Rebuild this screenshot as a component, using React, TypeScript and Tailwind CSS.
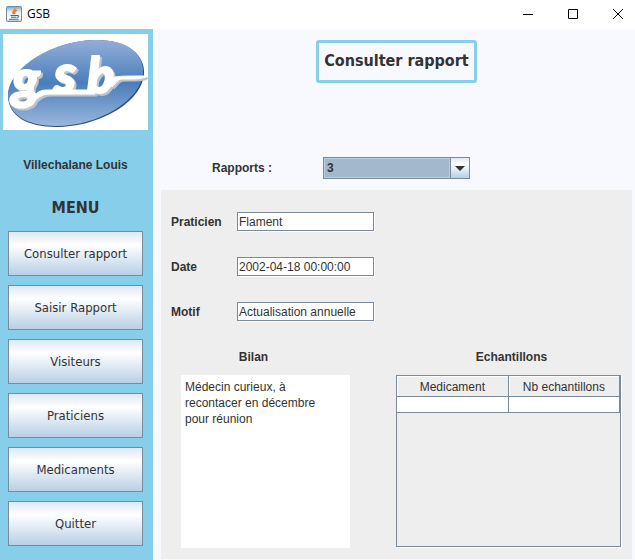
import React from "react";

const ARIAL = "font-['Liberation_Sans',Arial,sans-serif]";
const TAHOMA = "font-['DejaVu_Sans_Condensed','DejaVu_Sans',sans-serif] [font-stretch:condensed]";

const menuItems = ["Consulter rapport", "Saisir Rapport", "Visiteurs", "Praticiens", "Medicaments", "Quitter"];

const fields = [
  { id: "praticien", label: "Praticien", value: "Flament" },
  { id: "date", label: "Date", value: "2002-04-18 00:00:00" },
  { id: "motif", label: "Motif", value: "Actualisation annuelle" },
];

function JavaIcon() {
  return (
    <svg viewBox="0 0 16 16" className="h-4 w-4" aria-hidden="true">
      <defs>
        <linearGradient id="java-bg" x1="0" y1="0" x2="0" y2="1">
          <stop offset="0" stopColor="#86a3bb" />
          <stop offset="0.35" stopColor="#e6edf3" />
          <stop offset="0.8" stopColor="#ffffff" />
          <stop offset="1" stopColor="#a9bfd0" />
        </linearGradient>
      </defs>
      <rect x="0.5" y="0.5" width="15" height="15" rx="1" fill="url(#java-bg)" stroke="#6f8ba3" />
      <path d="M9 2.500C9.500 4.500 5.500 5 7.500 8.200M10.800 4.300C8.500 5.300 8 6.500 9 8.200" fill="none" stroke="#ee7a1a" strokeWidth="1.5" />
      <path d="M4.500 9.500h6.500M5 11.300h5.500M3 13.300h9.500M11 9.500c2.500-.4 2 1.800 0 2" fill="none" stroke="#3f6d92" strokeWidth="1.1" />
    </svg>
  );
}

function GsbLogo() {
  return (
    <svg viewBox="0 0 145 96" className="block w-full bg-white" role="img" aria-label="gsb">
      <defs>
        <linearGradient id="oval" x1="0" y1="0" x2="0" y2="1">
          <stop offset="0" stopColor="#93aed8" />
          <stop offset="0.5" stopColor="#4a7ebb" />
          <stop offset="1" stopColor="#9bb6dc" />
        </linearGradient>
        <filter id="relief" x="-10%" y="-10%" width="130%" height="130%">
          <feDropShadow dx="2" dy="2" stdDeviation="0.3" floodColor="#c0c3c8" floodOpacity="1" />
        </filter>
      </defs>
      <path d="M5 63C4 37 47 6 94 6c31 0 48 15 47 34-2 28-45 53-88 53C24 93 6 82 5 63z" fill="#2d4f80" />
      <path d="M5 62C4 36 47 6 94 6c31 0 47 14 46 33-2 27-44 53-87 53C24 92 6 81 5 62z" fill="url(#oval)" />
      <g filter="url(#relief)" fill="#fff" stroke="#fff" strokeLinejoin="round">
        <g className="font-['Lato',sans-serif] font-black italic" strokeWidth="2">
          <text x="9" y="64" fontSize="54">g</text>
          <text x="51" y="59" fontSize="54">s</text>
          <text x="84" y="59" fontSize="50">b</text>
        </g>
        <path d="M30 64C35 56 40 56 46 56H92V60H46C39 60 35 64 29 69z" strokeWidth="1" />
        <path d="M108 45C112 42 117 42 144 42C139 45 136 45 119 45C115 45 113 49 109 53z" strokeWidth="1" />
      </g>
    </svg>
  );
}

export default function App() {
  return (
    <div className={`flex min-h-screen flex-col bg-[#f8f8ff] text-xs text-[#333] ${ARIAL}`}>
      <header className="flex h-[29px] items-center overflow-hidden bg-white pb-0.5 pl-1.5 text-black">
        <JavaIcon />
        <span className="ml-[5px] flex-1 font-['Open_Sans',sans-serif] text-xs">GSB</span>
        <div className="-mr-[5px] flex h-full">
          <button aria-label="Minimize" className="flex w-[45px] items-center justify-center">
            <svg viewBox="0 0 10 10" className="w-2.5"><path d="M0 5.500h10" stroke="#000" /></svg>
          </button>
          <button aria-label="Maximize" className="flex w-[45px] items-center justify-center">
            <svg viewBox="0 0 10 10" className="w-2.5"><path d="M.5.5h9v9h-9z" fill="none" stroke="#000" /></svg>
          </button>
          <button aria-label="Close" className="flex w-[45px] items-center justify-center">
            <svg viewBox="0 0 10 10" className="w-2.5"><path d="M0 0l10 10M10 0L0 10" stroke="#000" /></svg>
          </button>
        </div>
      </header>
      <div className="flex flex-1">
        <aside className="flex w-[153px] shrink-0 flex-col bg-[#87ceeb]">
          <div className="pt-[5px] pr-[5px] pl-[3px]"><GsbLogo /></div>
          <p className="mt-[27px] pr-0.5 text-center leading-4 font-bold">Villechalane Louis</p>
          <h2 className={`mt-[25px] pr-0.5 text-center text-base leading-5 font-bold ${TAHOMA}`}>MENU</h2>
          <nav className="mt-[13px] flex flex-col gap-[9px] pr-[10px] pl-2">
            {menuItems.map((item) => (
              <button key={item} className={`h-[45px] border border-[#7a8a99] bg-linear-to-b from-[#dde8f3] via-white via-30% to-[#b8cfe5] text-[13px] ${TAHOMA}`}>
                {item}
              </button>
            ))}
          </nav>
        </aside>
        <main className="flex flex-1 flex-col pr-[3px] pb-px pl-2">
          <h1 className={`mt-[11px] self-center rounded-[3px] border-3 border-[#87ceeb] px-[5px] pt-2 pb-[9px] text-base leading-5 font-bold ${TAHOMA}`}>
            Consulter rapport
          </h1>
          <div className="mt-[74px] flex items-center pl-[51px]">
            <label htmlFor="rapports" className="w-[111px] font-bold">Rapports :</label>
            <div className="grid h-[22px] w-[147px] grid-cols-[1fr_19px] border border-[#7a8a99]">
              <select id="rapports" className="appearance-none border border-[#b8cfe5] bg-[#a3b8cc] pl-0.5 font-bold">
                <option>3</option>
              </select>
              <span className="flex items-center justify-center border-l border-[#7a8a99] bg-linear-to-b from-[#dde8f3] via-white via-30% to-[#b8cfe5]">
                <svg viewBox="0 0 10 5" className="w-2.5" aria-hidden="true"><path d="M0 0h10L5 5z" fill="#333" /></svg>
              </span>
            </div>
          </div>
          <section className="mt-[11px] flex-1 bg-[#eee] pt-[22px] pr-[11px] pb-[11px] pl-[10px]">
            <div className="flex flex-col gap-[26px]">
              {fields.map((f) => (
                <div key={f.id} className="flex items-center">
                  <label htmlFor={f.id} className="w-[66px] font-bold">{f.label}</label>
                  <input id={f.id} defaultValue={f.value} className="h-[19px] w-[137px] border border-[#7a8a99] bg-white px-px shadow-[1px_1px_0_#fff]" />
                </div>
              ))}
            </div>
            <div className="mt-[28px] grid grid-cols-[169px_225px] justify-between pl-[10px]">
              <div>
                <label htmlFor="bilan" className="block pr-6 text-center leading-4 font-bold">Bilan</label>
                <textarea id="bilan" className="mt-[10px] block h-[173px] w-full resize-none bg-white py-1 pr-5 pl-1 leading-4" defaultValue="Médecin curieux, à recontacer en décembre pour réunion" />
              </div>
              <div>
                <h3 id="ech" className="pl-1.5 text-center leading-4 font-bold">Echantillons</h3>
                <div className="mt-[10px] h-[172px] border border-[#7a8a99] shadow-[1px_1px_0_#fff]">
                  <table aria-labelledby="ech" className="w-full table-fixed border-collapse">
                    <thead><tr>
                      <th className="h-5 border-r border-b border-[#7a8a99] pt-0.5 font-normal shadow-[inset_1px_1px_0_#fff]">Medicament</th>
                      <th className="h-5 border-r border-b border-[#7a8a99] pt-0.5 font-normal shadow-[inset_1px_1px_0_#fff]">Nb echantillons</th>
                    </tr></thead>
                    <tbody><tr className="bg-white">
                      <td className="h-4 border-r border-b border-[#7a8a99]" /><td className="h-4 border-r border-b border-[#7a8a99]" />
                    </tr></tbody>
                  </table>
                </div>
              </div>
            </div>
          </section>
        </main>
      </div>
    </div>
  );
}
